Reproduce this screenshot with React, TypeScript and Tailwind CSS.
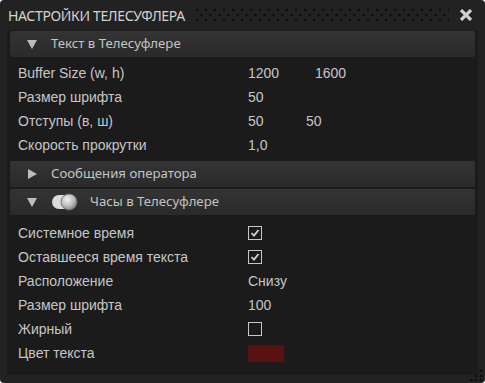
import React from "react";

const font = { fontFamily: '"Noto Sans", "Open Sans", sans-serif' };
const rowFont = { fontFamily: '"Liberation Sans", "Noto Sans", sans-serif' };

function TriDown() {
  return (
    <svg width="10" height="9" viewBox="0 0 10 9" className="shrink-0">
      <polygon points="0,0 10,0 5,9" fill="#bdbdbd" />
    </svg>
  );
}
function TriRight() {
  return (
    <svg width="9" height="10" viewBox="0 0 9 10" className="shrink-0">
      <polygon points="0,0 9,5 0,10" fill="#bdbdbd" />
    </svg>
  );
}

function Header({ open, label, toggle }: { open: boolean; label: string; toggle?: boolean }) {
  return (
    <div className="h-[26px] mx-[3px] rounded-[2px] bg-gradient-to-b from-[#343434] to-[#2a2a2a] flex items-center pl-[17px] text-[13.2px] text-[#c4c4c4]">
      <div className="w-[10px] flex justify-center">{open ? <TriDown /> : <TriRight />}</div>
      {toggle ? (
        <>
          <svg width="28" height="20" viewBox="0 0 28 20" className="ml-[14px] shrink-0">
            <defs>
              <radialGradient id="knob" cx="0.4" cy="0.35" r="0.7">
                <stop offset="0" stopColor="#f4f4f4" />
                <stop offset="0.6" stopColor="#b8b8b8" />
                <stop offset="1" stopColor="#7a7a7a" />
              </radialGradient>
            </defs>
            <rect x="1" y="3" width="22" height="14" rx="7" fill="#dcdcdc" />
            <circle cx="18" cy="10" r="8" fill="url(#knob)" stroke="#6a6a6a" strokeWidth="0.8" />
          </svg>
          <span className="ml-[11px]">{label}</span>
        </>
      ) : (
        <span className="ml-[14px]">{label}</span>
      )}
    </div>
  );
}

function Row({ label, children }: { label: string; children?: React.ReactNode }) {
  return (
    <div style={rowFont} className="h-[24px] flex items-center text-[14px] text-[#c6c6c6]">
      <span className="w-[241px] pl-[11px] shrink-0">{label}</span>
      {children}
    </div>
  );
}

function Check({ checked }: { checked: boolean }) {
  return (
    <div className="w-[14px] h-[14px] border border-[#c8c8c8] flex items-center justify-center">
      {checked && (
        <svg width="10" height="10" viewBox="0 0 10 10">
          <path d="M1.5 5.2 L4 7.6 L8.5 2" stroke="#d0d0d0" strokeWidth="1.8" fill="none" />
        </svg>
      )}
    </div>
  );
}

export default function App() {
  return (
    <div style={font} className="w-[485px] h-[383px] bg-[#222222] rounded-[4px] flex flex-col overflow-hidden relative">
      <div className="h-[30px] flex items-center pl-[8px] pr-[12px] shrink-0">
        <span className="text-[14px] text-[#d2d2d2] tracking-[-0.35px]">НАСТРОЙКИ ТЕЛЕСУФЛЕРА</span>
        <div className="flex-1 h-[16px] ml-[10px] mr-[10px]">
          <svg width="100%" height="16">
            <defs>
              <pattern id="dots" width="9" height="10" patternUnits="userSpaceOnUse">
                <circle cx="2" cy="3" r="1.3" fill="#0c0c0c" />
                <circle cx="6.5" cy="8" r="1.3" fill="#0c0c0c" />
              </pattern>
            </defs>
            <rect width="100%" height="16" fill="url(#dots)" />
          </svg>
        </div>
        <svg width="14" height="12" viewBox="0 0 14 12">
          <path d="M2 1 L12 11 M12 1 L2 11" stroke="#cfcfcf" strokeWidth="3.2" />
        </svg>
      </div>
      <div className="mx-[7px] h-[345px] bg-[#1b1b1b] pt-[1px] flex flex-col">
        <Header open label="Текст в Телесуфлере" />
        <div className="h-[4px]" />
        <Row label="Buffer Size (w, h)">
          <span className="w-[67px]">1200</span>
          <span>1600</span>
        </Row>
        <Row label="Размер шрифта">
          <span>50</span>
        </Row>
        <Row label="Отступы (в, ш)">
          <span className="w-[58px]">50</span>
          <span>50</span>
        </Row>
        <Row label="Скорость прокрутки">
          <span>1,0</span>
        </Row>
        <div className="h-[4px]" />
        <Header open={false} label="Сообщения оператора" />
        <div className="h-[2px]" />
        <Header open label="Часы в Телесуфлере" toggle />
        <div className="h-[6px]" />
        <Row label="Системное время">
          <Check checked />
        </Row>
        <Row label="Оставшееся время текста">
          <Check checked />
        </Row>
        <Row label="Расположение">
          <span>Снизу</span>
        </Row>
        <Row label="Размер шрифта">
          <span>100</span>
        </Row>
        <Row label="Жирный">
          <Check checked={false} />
        </Row>
        <Row label="Цвет текста">
          <div className="w-[36px] h-[17px] bg-[#5a1111]" />
        </Row>
      </div>
      <svg width="14" height="14" viewBox="0 0 14 14" className="absolute right-[1px] bottom-[1px]">
        <circle cx="11" cy="3" r="1.3" fill="#0c0c0c" />
        <circle cx="6" cy="8" r="1.3" fill="#0c0c0c" />
        <circle cx="11" cy="8" r="1.3" fill="#0c0c0c" />
        <circle cx="1.5" cy="12" r="1.3" fill="#0c0c0c" />
        <circle cx="6" cy="12" r="1.3" fill="#0c0c0c" />
        <circle cx="11" cy="12" r="1.3" fill="#0c0c0c" />
      </svg>
    </div>
  );
}
